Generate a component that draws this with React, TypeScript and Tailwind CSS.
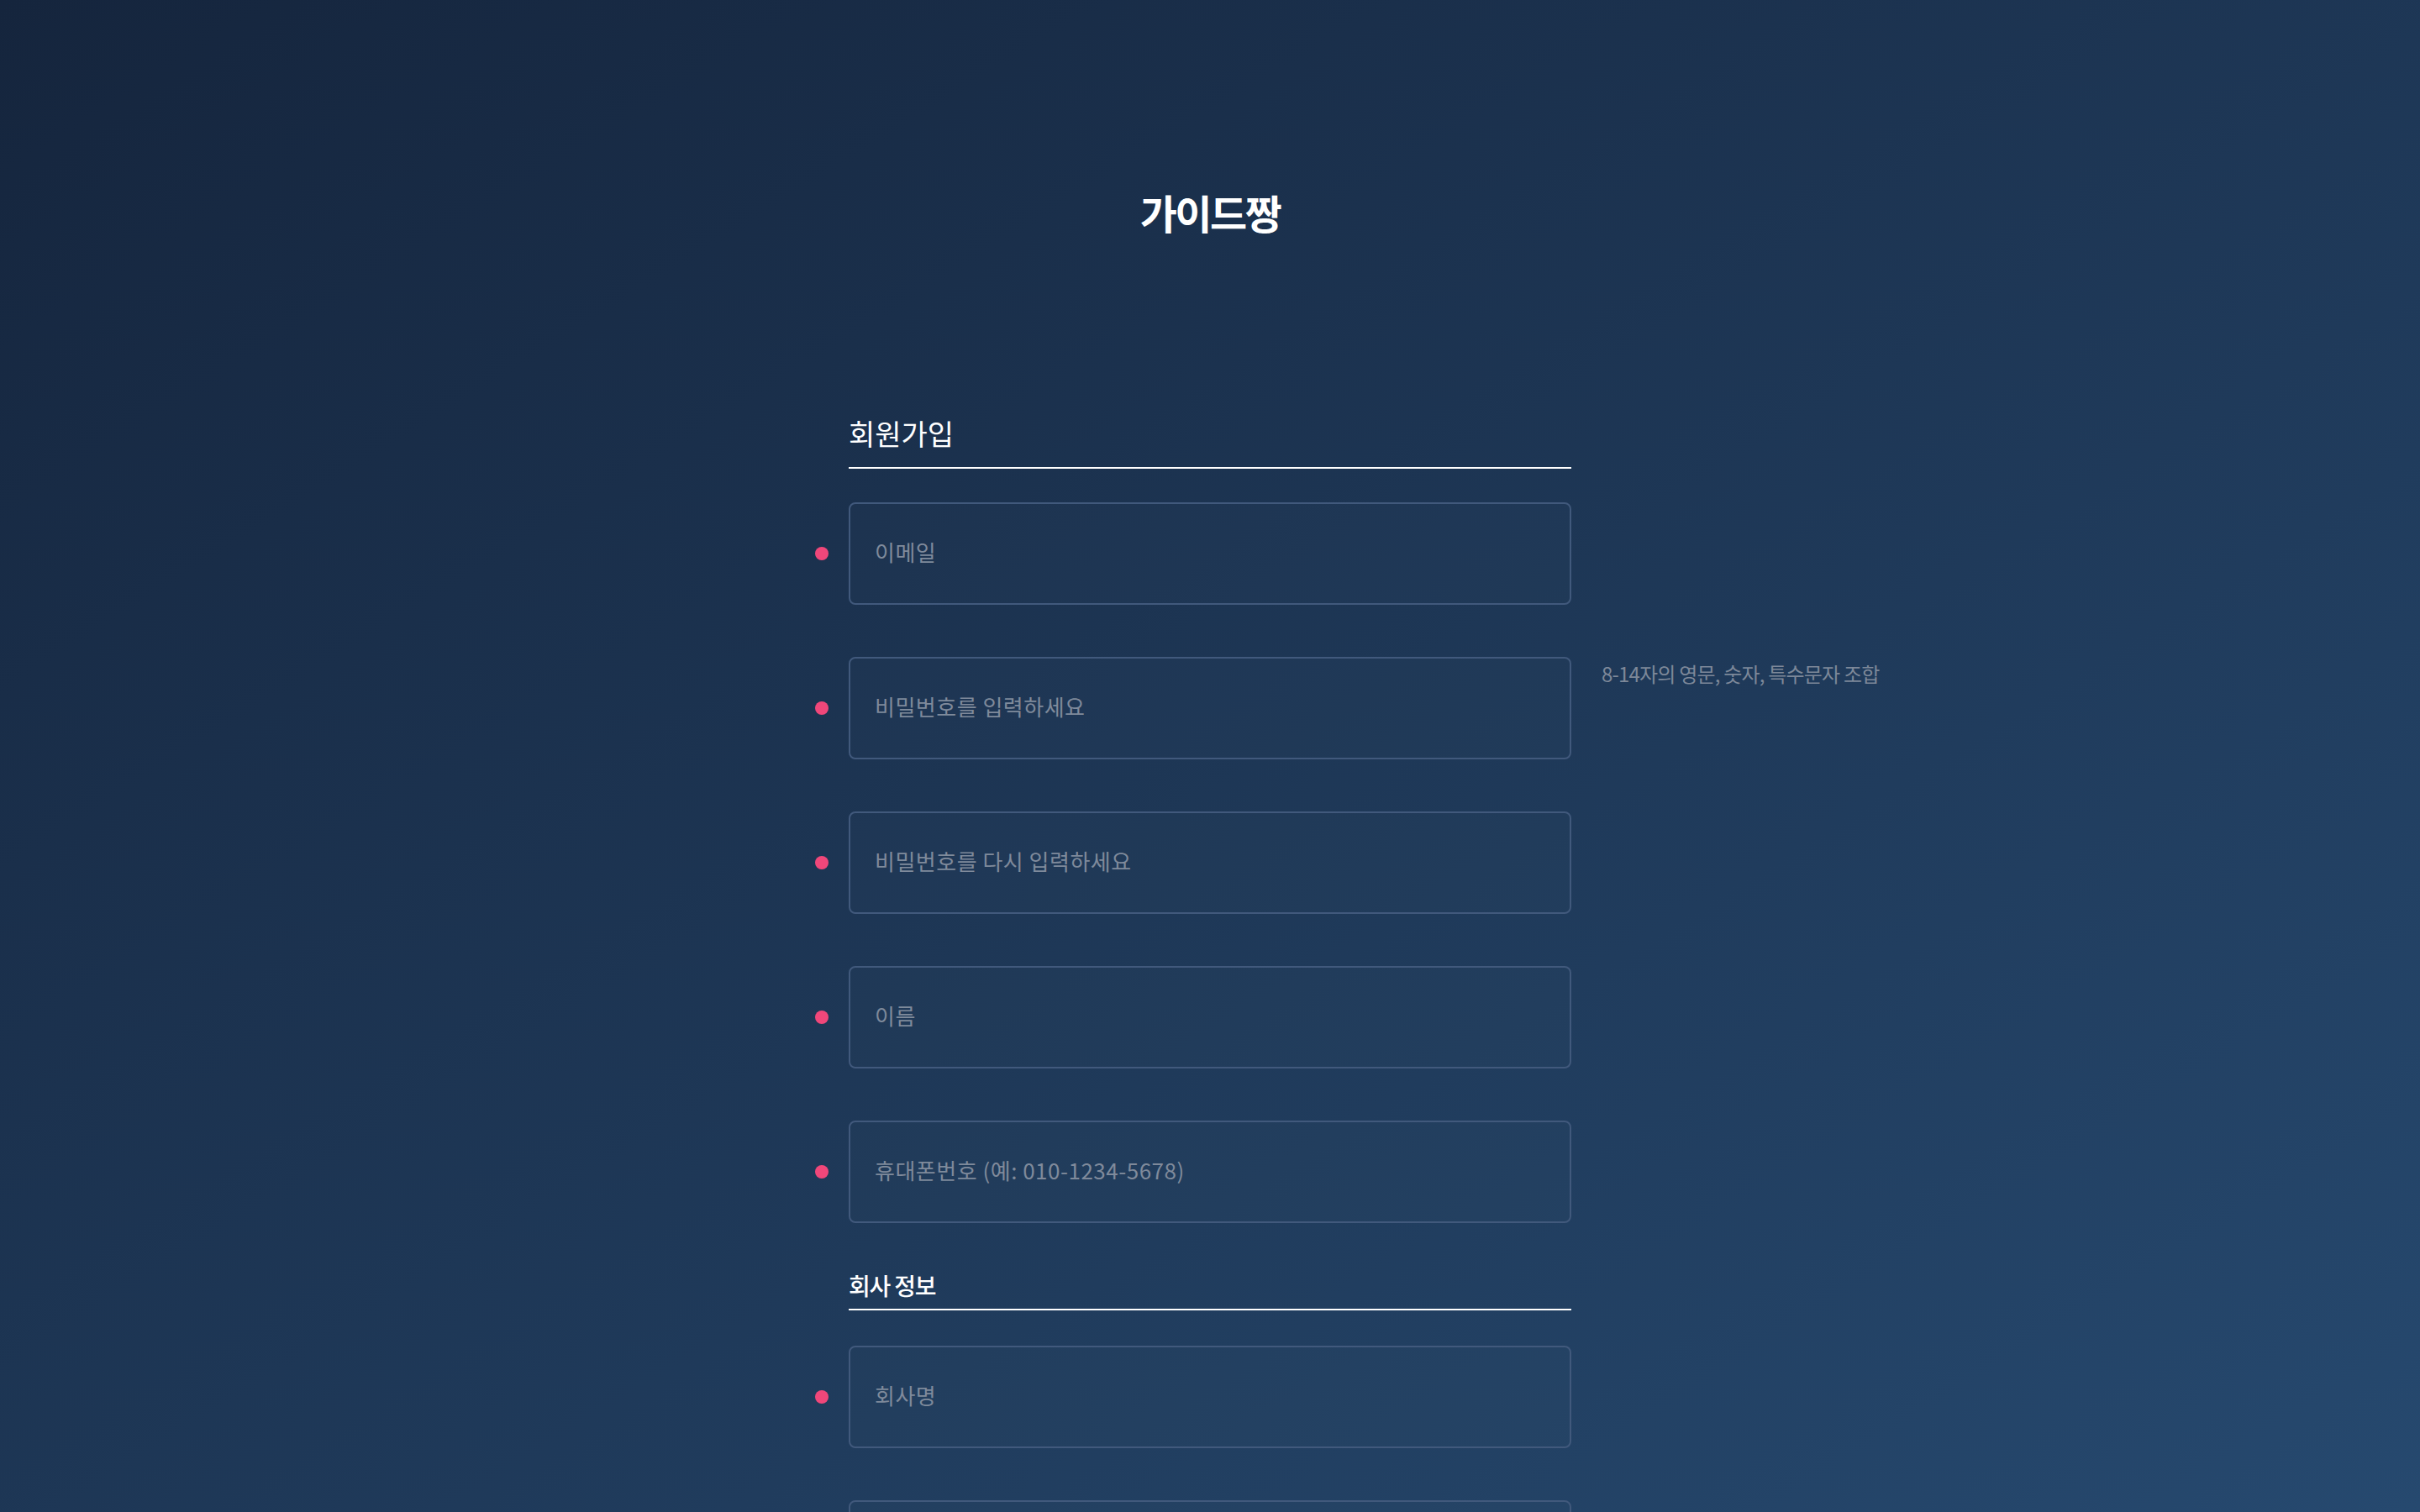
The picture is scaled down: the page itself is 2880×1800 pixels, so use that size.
import { useState } from "react";

type Field = {
  name: string;
  placeholder: string;
  type?: string;
  hint?: string;
};

const accountFields: Field[] = [
  { name: "email", placeholder: "이메일", type: "email" },
  { name: "password", placeholder: "비밀번호를 입력하세요", type: "password", hint: "8-14자의 영문, 숫자, 특수문자 조합" },
  { name: "passwordConfirm", placeholder: "비밀번호를 다시 입력하세요", type: "password" },
  { name: "name", placeholder: "이름" },
  { name: "phone", placeholder: "휴대폰번호 (예: 010-1234-5678)", type: "tel" },
];

const companyFields: Field[] = [
  { name: "company", placeholder: "회사명" },
  { name: "bizNumber", placeholder: "사업자등록번호" },
  { name: "department", placeholder: "부서명" },
];

function FieldRow({ field, value, onChange }: { field: Field; value: string; onChange: (v: string) => void }) {
  return (
    <div className="relative h-[122px]">
      <span className="absolute left-[-40px] top-1/2 -translate-y-1/2 w-4 h-4 rounded-full bg-[#f0477a]" />
      <input
        name={field.name}
        type={field.type ?? "text"}
        value={value}
        onChange={(e) => onChange(e.target.value)}
        placeholder={field.placeholder}
        className="w-full h-full rounded-[8px] border-2 border-[#41597c] bg-white/[0.01] pl-[29px] pr-8 pb-[5px] text-[26px] tracking-[0.5px] text-white placeholder:text-[#7f8a9b] outline-none focus:border-[#6b86ad]"
      />
      {field.hint && (
        <p className="absolute left-full top-[4px] ml-[36px] whitespace-nowrap text-[24px] leading-[32px] tracking-[-0.8px] text-[#7d8899]">
          {field.hint}
        </p>
      )}
    </div>
  );
}

export default function App() {
  const [values, setValues] = useState<Record<string, string>>({});
  const set = (k: string) => (v: string) => setValues((p) => ({ ...p, [k]: v }));

  return (
    <div className="h-screen overflow-hidden bg-linear-to-br from-[#15253d] to-[#26496f] font-['Noto_Sans_CJK_KR','Noto_Sans',sans-serif]">
      <div className="flex flex-col items-center pt-[220px]">
        <h1 className="text-[48px] leading-[64px] font-semibold tracking-[-2.5px] text-white">가이드짱</h1>

        <form className="mt-[208px] w-[860px]" onSubmit={(e) => e.preventDefault()}>
          <h2 className="border-b-2 border-white pb-[16px] text-[34px] leading-[48px] text-white">회원가입</h2>
          <div className="mt-[40px] flex flex-col gap-[62px]">
            {accountFields.map((f) => (
              <FieldRow key={f.name} field={f} value={values[f.name] ?? ""} onChange={set(f.name)} />
            ))}
          </div>

          <h3 className="mt-[54px] border-b-2 border-white pb-[8px] text-[28px] leading-[40px] font-medium tracking-[-1.2px] text-white">
            회사 정보
          </h3>
          <div className="mt-[42px] flex flex-col gap-[62px]">
            {companyFields.map((f) => (
              <FieldRow key={f.name} field={f} value={values[f.name] ?? ""} onChange={set(f.name)} />
            ))}
          </div>
        </form>
      </div>
    </div>
  );
}
